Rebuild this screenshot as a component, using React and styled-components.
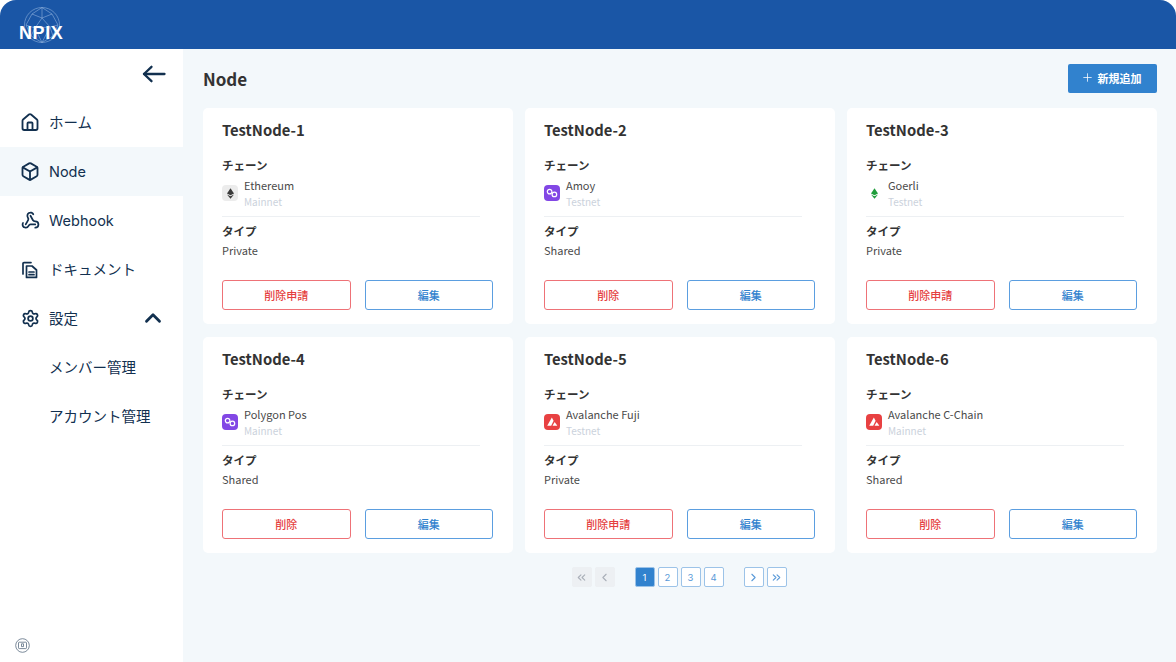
import React from 'react';
import styled, { createGlobalStyle } from 'styled-components';
import { Box, ChevronLeft, ChevronRight, ChevronUp, ChevronsLeft, ChevronsRight, House, Plus, Settings, Webhook } from 'lucide-react';

const GlobalStyle = createGlobalStyle`
    html, body {
        margin: 0;
        padding: 0;
        background: #ffffff;
    }
    * {
        box-sizing: border-box;
    }
`

const Frame = styled.div`
    display: flex;
    flex-direction: column;
    width: 1176px;
    height: 662px;
    overflow: hidden;
    background: #f3f8fb;
    border-radius: 16px 16px 0 0;
    font-family: 'Noto Sans CJK JP', 'Noto Sans', sans-serif;
`

const Header = styled.header`
    display: flex;
    align-items: center;
    flex: none;
    height: 49px;
    padding-left: 18px;
    background: #1a56a6;
`

const LogoWrap = styled.div`
    position: relative;
    width: 46px;
    height: 44px;
    margin-top: 4px;
`

const LogoText = styled.span`
    position: absolute;
    left: 1px;
    top: 18px;
    color: #ffffff;
    font-family: 'Liberation Sans', sans-serif;
    font-size: 18px;
    font-weight: 700;
    letter-spacing: 0.6px;
    line-height: 20px;
`

const Body = styled.div`
    display: flex;
    flex: 1;
    min-height: 0;
`

const Sidebar = styled.aside`
    display: flex;
    flex-direction: column;
    flex: none;
    width: 183px;
    background: #ffffff;
    font-family: 'Inter', 'Noto Sans CJK JP', sans-serif;
    color: #12304f;
`

const Collapse = styled.div`
    display: flex;
    justify-content: flex-end;
    height: 49px;
    padding: 16px 17px 0 0;
`

const NavItem = styled.div`
    display: flex;
    align-items: center;
    height: 49px;
    padding: ${p => (p.$sub ? '0 0 2px 49px' : '0 20px 2px')};
    gap: 9px;
    font-size: 14.5px;
    background: ${p => (p.$active ? '#f3f8fb' : 'transparent')};
`

const NavLabel = styled.span`
    flex: 1;
    padding-top: ${p => (p.$latin ? '2px' : '0')};
`

const NavIcon = styled.div`
    display: flex;
    align-items: center;
    justify-content: center;
    flex: none;
    width: 20px;
    margin-top: 2px;
`

const Chevron = styled.div`
    display: flex;
    margin: 0 -3px 0 0;
`

const HelpBadge = styled.div`
    display: flex;
    margin-top: auto;
    padding: 0 0 9px 15px;
`

const Main = styled.main`
    flex: 1;
    padding: 15px 19px 0 20px;
`

const TitleRow = styled.div`
    display: flex;
    align-items: center;
    justify-content: space-between;
    height: 29px;
    margin-bottom: 15px;
`

const Title = styled.h1`
    margin: 0;
    color: #333333;
    font-size: 17px;
    font-weight: 700;
    line-height: 24px;
`

const AddButton = styled.button`
    display: flex;
    align-items: center;
    justify-content: center;
    gap: 4px;
    width: 89px;
    height: 29px;
    padding: 0 3px 2px 0;
    border: 0;
    border-radius: 2px;
    background: #3182ce;
    color: #ffffff;
    font-family: inherit;
    font-size: 11px;
    font-weight: 700;
`

const CardGrid = styled.div`
    display: grid;
    grid-template-columns: repeat(3, 310px);
    grid-auto-rows: 216px;
    gap: 13px 12px;
`

const Card = styled.article`
    display: flex;
    flex-direction: column;
    padding: 12px 20px 14px 19px;
    border-radius: 5px;
    background: #ffffff;
`

const CardTitle = styled.h2`
    margin: 0 0 16px;
    color: #333333;
    font-size: 14.8px;
    font-weight: 700;
    line-height: 20px;
`

const Label = styled.div`
    color: #333333;
    font-size: 11.5px;
    font-weight: 700;
    line-height: 18px;
`

const ChainRow = styled.div`
    display: flex;
    align-items: center;
    gap: 6px;
    width: 258px;
    height: 33px;
    margin: 2px 0 7px;
`

const ChainName = styled.div`
    color: #4a4a4a;
    font-size: 11px;
    line-height: 18px;
`

const ChainNet = styled.div`
    color: #cbd2dc;
    font-size: 10px;
    line-height: 16px;
`

const Divider = styled.hr`
    width: 258px;
    margin: 0 0 5px;
    border: 0;
    border-top: 1px solid #edf0f3;
`

const TypeValue = styled.div`
    margin-top: 1px;
    color: #4a4a4a;
    font-size: 11px;
    line-height: 18px;
`

const Actions = styled.div`
    display: flex;
    gap: 14px;
    margin-top: auto;
`

const ActionButton = styled.button`
    width: 129px;
    height: 30px;
    border: 1px solid ${p => (p.$danger ? '#ee7277' : '#5b9ee0')};
    border-radius: 3px;
    background: #ffffff;
    color: ${p => (p.$danger ? '#e53e3e' : '#3182ce')};
    font-family: inherit;
    font-size: 11px;
    font-weight: 500;
`

const Pager = styled.nav`
    display: flex;
    justify-content: center;
    gap: 20px;
    margin-top: 14px;
    padding-right: 2px;
`

const PagerGroup = styled.div`
    display: flex;
    gap: 3px;
`

const PageButton = styled.button`
    display: flex;
    align-items: center;
    justify-content: center;
    width: 20px;
    height: 20px;
    padding: 0;
    border: 1px solid ${p => (p.$disabled ? '#edf0f3' : '#9cc3e8')};
    border-radius: 2px;
    background: ${p => (p.$active ? '#3182ce' : p.$disabled ? '#edf0f3' : '#ffffff')};
    color: ${p => (p.$active ? '#ffffff' : p.$disabled ? '#a9afb8' : '#5a9ad8')};
    font-family: 'Inter', sans-serif;
    font-size: 9.5px;
`

const IconTile = styled.div`
    display: flex;
    align-items: center;
    justify-content: center;
    flex: none;
    width: 16px;
    height: 16px;
    margin-top: 1px;
    border-radius: 4px;
    background: ${p => p.$bg};
`

const LogoGlobe = () => (
    <svg width="38" height="38" viewBox="0 0 38 38" fill="none" stroke="#8fb0dc" strokeWidth="0.6" style={{ position: 'absolute', left: 5, top: 1 }}>
        <circle cx="19" cy="19" r="17.5" />
        <path d="M19 1.5 L9 8 L3 19 L8 30 L19 36.5 L30 30 L35 19 L29 8 Z" />
        <path d="M9 8 L19 12 L29 8 M19 1.5 L19 12 L12 22 L3 19 M19 12 L27 21 L35 19 M12 22 L27 21 L30 30 M12 22 L8 30 M12 22 L19 36.5 L27 21" />
    </svg>
)

const BackArrow = () => (
    <svg width="24" height="18" viewBox="0 0 24 18" fill="none" stroke="#12304f" strokeWidth="2.3" strokeLinecap="round" strokeLinejoin="round">
        <path d="M2 9 H22.5" />
        <path d="M9.5 1.8 L2 9 L9.5 16.2" />
    </svg>
)

const DocIcon = () => (
    <svg width="18" height="18" viewBox="0 0 18 18" fill="none" stroke="#12304f" strokeWidth="1.7" strokeLinejoin="round" strokeLinecap="round">
        <path d="M2 13 V2.6 A1 1 0 0 1 3 1.6 H10" />
        <path d="M5.5 5 H11 L15.5 9 V16.4 H5.5 Z" />
        <path d="M8 11 H13 M8 13.7 H13" />
    </svg>
)

const HelpIcon = () => (
    <svg width="15" height="15" viewBox="0 0 15 15" fill="none" stroke="#5a6d82" strokeWidth="0.8">
        <circle cx="7.5" cy="7.5" r="6.8" />
        <rect x="3.5" y="4.2" width="8" height="6.4" rx="0.8" />
        <path d="M6.5 5.8 H8.5 V8.6 H6.5 Z" />
    </svg>
)

const EthIcon = ({ color = '#3b3b3b' }) => (
    <svg width="7" height="11" viewBox="0 0 8 12" fill={color}>
        <path d="M4 0 L8 6 L4 8 L0 6 Z" />
        <path d="M0 7 L4 9 L8 7 L4 12 Z" />
    </svg>
)

const PolygonIcon = () => (
    <svg width="12" height="10" viewBox="0 0 12 10" fill="none" stroke="#ffffff" strokeWidth="1.2">
        <circle cx="3.6" cy="3.6" r="2.3" />
        <circle cx="8.4" cy="6.4" r="2.3" />
    </svg>
)

const AvaxIcon = () => (
    <svg width="11" height="10" viewBox="0 0 10 9" fill="#ffffff">
        <path d="M4.4 0.4 L0.2 8 H3.8 L6 3.4 Z" />
        <path d="M7 4.6 L5 8 H9.4 Z" />
    </svg>
)

const chainIcons = {
    eth: <IconTile $bg="#ececec"><EthIcon /></IconTile>,
    goerli: <IconTile $bg="transparent"><EthIcon color="#1f9d3a" /></IconTile>,
    polygon: <IconTile $bg="#8247e5"><PolygonIcon /></IconTile>,
    avax: <IconTile $bg="#e84142"><AvaxIcon /></IconTile>,
};

const nodes = [
    { name: 'TestNode-1', icon: 'eth', chain: 'Ethereum', net: 'Mainnet', type: 'Private', del: '削除申請' },
    { name: 'TestNode-2', icon: 'polygon', chain: 'Amoy', net: 'Testnet', type: 'Shared', del: '削除' },
    { name: 'TestNode-3', icon: 'goerli', chain: 'Goerli', net: 'Testnet', type: 'Private', del: '削除申請' },
    { name: 'TestNode-4', icon: 'polygon', chain: 'Polygon Pos', net: 'Mainnet', type: 'Shared', del: '削除' },
    { name: 'TestNode-5', icon: 'avax', chain: 'Avalanche Fuji', net: 'Testnet', type: 'Private', del: '削除申請' },
    { name: 'TestNode-6', icon: 'avax', chain: 'Avalanche C-Chain', net: 'Mainnet', type: 'Shared', del: '削除' },
];

const App = () => (
    <Frame>
        <GlobalStyle />
        <Header>
            <LogoWrap>
                <LogoGlobe />
                <LogoText>NPIX</LogoText>
            </LogoWrap>
        </Header>
        <Body>
            <Sidebar>
                <Collapse><BackArrow /></Collapse>
                <NavItem><NavIcon><House size={21} strokeWidth={2.2} /></NavIcon><NavLabel>ホーム</NavLabel></NavItem>
                <NavItem $active><NavIcon><Box size={21} strokeWidth={2.2} /></NavIcon><NavLabel $latin>Node</NavLabel></NavItem>
                <NavItem><NavIcon><Webhook size={19} strokeWidth={2.2} /></NavIcon><NavLabel $latin>Webhook</NavLabel></NavItem>
                <NavItem><NavIcon><DocIcon /></NavIcon><NavLabel>ドキュメント</NavLabel></NavItem>
                <NavItem><NavIcon><Settings size={19} strokeWidth={2.2} /></NavIcon><NavLabel>設定</NavLabel><Chevron><ChevronUp size={26} strokeWidth={2.6} /></Chevron></NavItem>
                <NavItem $sub>メンバー管理</NavItem>
                <NavItem $sub>アカウント管理</NavItem>
                <HelpBadge><HelpIcon /></HelpBadge>
            </Sidebar>
            <Main>
                <TitleRow>
                    <Title>Node</Title>
                    <AddButton><Plus size={13} strokeWidth={1.4} />新規追加</AddButton>
                </TitleRow>
                <CardGrid>
                    {nodes.map(n => (
                        <Card key={n.name}>
                            <CardTitle>{n.name}</CardTitle>
                            <Label>チェーン</Label>
                            <ChainRow>
                                {chainIcons[n.icon]}
                                <div>
                                    <ChainName>{n.chain}</ChainName>
                                    <ChainNet>{n.net}</ChainNet>
                                </div>
                            </ChainRow>
                            <Divider />
                            <Label>タイプ</Label>
                            <TypeValue>{n.type}</TypeValue>
                            <Actions>
                                <ActionButton $danger>{n.del}</ActionButton>
                                <ActionButton>編集</ActionButton>
                            </Actions>
                        </Card>
                    ))}
                </CardGrid>
                <Pager>
                    <PagerGroup>
                        <PageButton $disabled><ChevronsLeft size={13} /></PageButton>
                        <PageButton $disabled><ChevronLeft size={13} /></PageButton>
                    </PagerGroup>
                    <PagerGroup>
                        {[1, 2, 3, 4].map(p => <PageButton key={p} $active={p === 1}>{p}</PageButton>)}
                    </PagerGroup>
                    <PagerGroup>
                        <PageButton><ChevronRight size={13} /></PageButton>
                        <PageButton><ChevronsRight size={13} /></PageButton>
                    </PagerGroup>
                </Pager>
            </Main>
        </Body>
    </Frame>
);

export default App;
